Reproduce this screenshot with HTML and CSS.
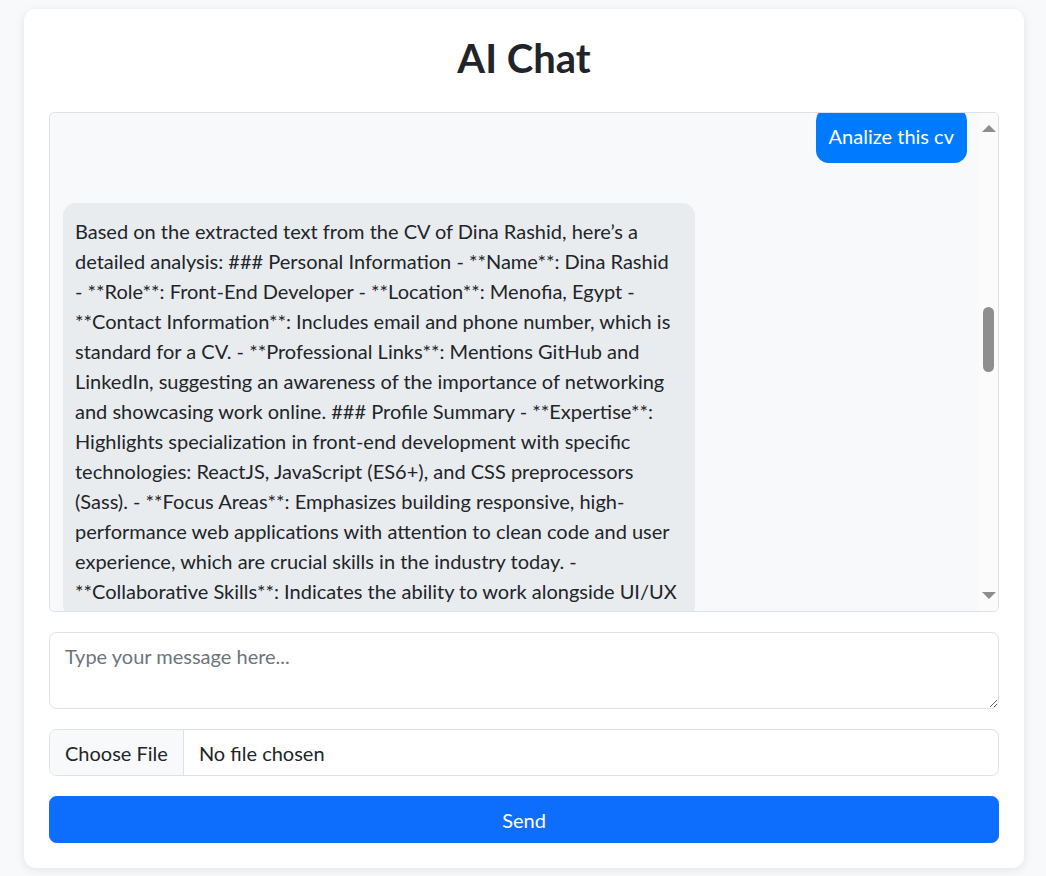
FILE: index.html
```html
<!DOCTYPE html>
<html lang="en">
<head>
<meta charset="utf-8">
<title>AI Chat</title>
<link rel="stylesheet" href="styles.css">
</head>
<body>
<div class="page">
  <div class="card">
    <h2 class="title">AI Chat</h2>
    <div class="chat-box">
      <div class="chat-viewport">
        <div class="messages">
          <div class="msg msg-user">Analize this cv</div>
          <div class="msg msg-bot">Based on the extracted text from the CV of Dina Rashid, here’s a detailed analysis: ### Personal Information - **Name**: Dina Rashid - **Role**: Front-End Developer - **Location**: Menofia, Egypt - **Contact Information**: Includes email and phone number, which is standard for a CV. - **Professional Links**: Mentions GitHub and LinkedIn, suggesting an awareness of the importance of networking and showcasing work online. ### Profile Summary - **Expertise**: Highlights specialization in front-end development with specific technologies: ReactJS, JavaScript (ES6+), and CSS preprocessors (Sass). - **Focus Areas**: Emphasizes building responsive, high-performance web applications with attention to clean code and user experience, which are crucial skills in the industry today. - **Collaborative Skills**: Indicates the ability to work alongside UI/UX</div>
        </div>
      </div>
      <div class="scrollbar">
        <div class="arrow arrow-up"></div>
        <div class="track"><div class="thumb"></div></div>
        <div class="arrow arrow-down"></div>
      </div>
    </div>
    <textarea class="input message-input" rows="2" placeholder="Type your message here..."></textarea>
    <label class="input file-input">
      <span class="file-btn">Choose File</span>
      <span class="file-name">No file chosen</span>
      <input type="file" class="file-hidden">
    </label>
    <button class="send-btn" type="button">Send</button>
  </div>
</div>
</body>
</html>
```
FILE: styles.css
```css
* { box-sizing: border-box; }
html, body { margin: 0; padding: 0; }
body {
  background: #f8f9fa;
  font-family: Lato, "Noto Sans", sans-serif;
  font-size: 20px;
  line-height: 1.5;
  color: #212529;
}
.page { padding: 9px 0 8px 24px; }
.card {
  width: 1000px;
  background: #fff;
  border-radius: 12px;
  box-shadow: 0 2px 10px rgba(0,0,0,0.09);
  padding: 25px;
  display: flex;
  flex-direction: column;
}
.title {
  margin: 0 0 30px;
  text-align: center;
  font-size: 40px;
  line-height: 48px;
  font-weight: 700;
  color: #212529;
}
.chat-box {
  height: 500px;
  border: 1px solid #dee2e6;
  border-radius: 5px;
  background: #f8f9fa;
  display: flex;
  overflow: hidden;
}
.chat-viewport {
  flex: 1;
  overflow: hidden;
  padding: 0 12.5px;
}
.messages {
  margin-top: -5px;
  display: flex;
  flex-direction: column;
  gap: 40px;
}
.msg {
  padding: 12.5px;
  border-radius: 12.5px;
  max-width: 70%;
}
.msg-user {
  align-self: flex-end;
  background: #007bff;
  color: #fff;
}
.msg-bot {
  align-self: flex-start;
  width: 632px;
  padding-right: 15px;
  background: #e9ecef;
  color: #212529;
}
.scrollbar {
  width: 19px;
  background: #fbfbfb;
  display: flex;
  flex-direction: column;
  align-items: center;
}
.arrow {
  width: 0; height: 0;
  border-left: 7px solid transparent;
  border-right: 7px solid transparent;
  flex: none;
}
.arrow-up { border-bottom: 7px solid #8d8d8d; margin: 12px 0 6px; }
.arrow-down { border-top: 7px solid #8d8d8d; margin: 6px 0 12px; }
.track { flex: 1; width: 100%; display: flex; justify-content: center; padding-top: 169px; }
.thumb { width: 11px; height: 65px; border-radius: 6px; background: #8f8f8f; }
.input {
  width: 100%;
  border: 1px solid #dee2e6;
  border-radius: 7.5px;
  background: #fff;
  font-family: inherit;
  font-size: 20px;
  line-height: 1.5;
  color: #212529;
}
.message-input {
  margin-top: 20px;
  height: 77px;
  padding: 7.5px 15px;
  resize: vertical;
  display: block;
}
.message-input::placeholder { color: #6c757d; }
.file-input {
  margin-top: 20px;
  height: 47px;
  display: flex;
  align-items: stretch;
  overflow: hidden;
  cursor: pointer;
}
.file-btn {
  padding: 7.5px 15px;
  background: #f8f9fa;
  border-right: 1px solid #dee2e6;
  color: #212529;
}
.file-name { padding: 7.5px 15px; }
.file-hidden { display: none; }
.send-btn {
  margin-top: 20px;
  height: 47px;
  width: 100%;
  border: 1px solid #0d6efd;
  border-radius: 7.5px;
  background: #0d6efd;
  color: #fff;
  font-family: inherit;
  font-size: 20px;
  line-height: 1.5;
  cursor: pointer;
}
```
